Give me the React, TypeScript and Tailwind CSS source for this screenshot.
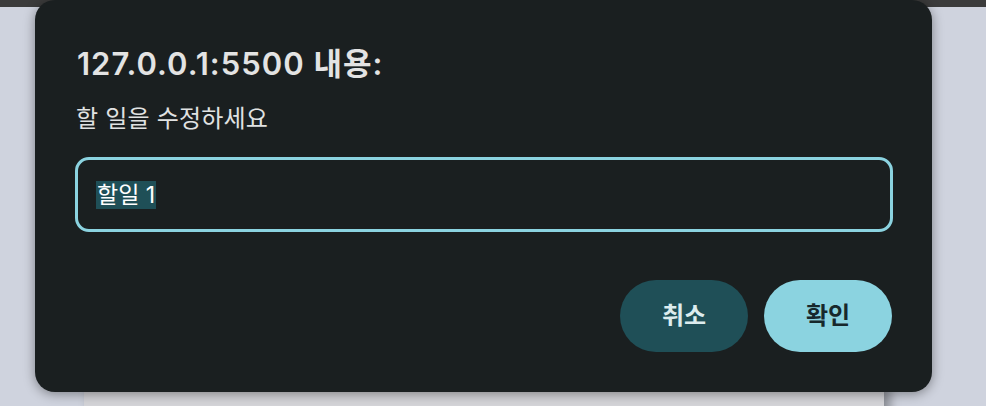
import React from 'react';

const font = { fontFamily: '"Inter", "Noto Sans CJK KR", sans-serif' };

const App: React.FC = () => {
  return (
    <div className="relative w-[986px] h-[406px] overflow-hidden bg-[#cfd3de]" style={font}>
      {/* page behind the dialog */}
      <div className="h-[7px] bg-[#3b3b3b]" />
      <div className="pt-[380px] pl-[84px]">
        <div className="w-[800px] h-[40px] bg-[#d4d4d8] shadow-[6px_0_10px_rgba(0,0,0,0.35)]" />
      </div>

      {/* dialog */}
      <div className="absolute left-[35px] top-0 w-[897px] h-[392px] rounded-[20px] bg-[#1a1f20] shadow-[0_2px_12px_rgba(0,0,0,0.4)] pl-[40px] pr-[39px] pt-[45px] flex flex-col">
        <h1 className="ml-[2px] text-[31px] leading-[38px] font-semibold tracking-[1px] text-[#e3e3e3]">127.0.0.1:5500 내용:</h1>
        <p className="ml-[1px] mt-[21px] text-[24px] leading-[30px] text-[#e0e2e2] tracking-[0.2px]">할 일을 수정하세요</p>
        <div className="mt-[23px] h-[75px] rounded-[14px] border-[3px] border-[#8bd3e0] flex items-center pl-[18px]">
          <span className="text-[23px] leading-[28px] text-white bg-[#1f4f57] px-[1px]">할일 1</span>
        </div>
        <div className="mt-[48px] flex justify-end gap-[16px] pr-[1px]">
          <button className="w-[128px] h-[72px] rounded-full bg-[#1f4f57] text-[#dcecee] text-[24px] font-semibold">취소</button>
          <button className="w-[128px] h-[72px] rounded-full bg-[#8bd3e0] text-[#17282c] text-[24px] font-semibold">확인</button>
        </div>
      </div>
    </div>
  );
};

export default App;
